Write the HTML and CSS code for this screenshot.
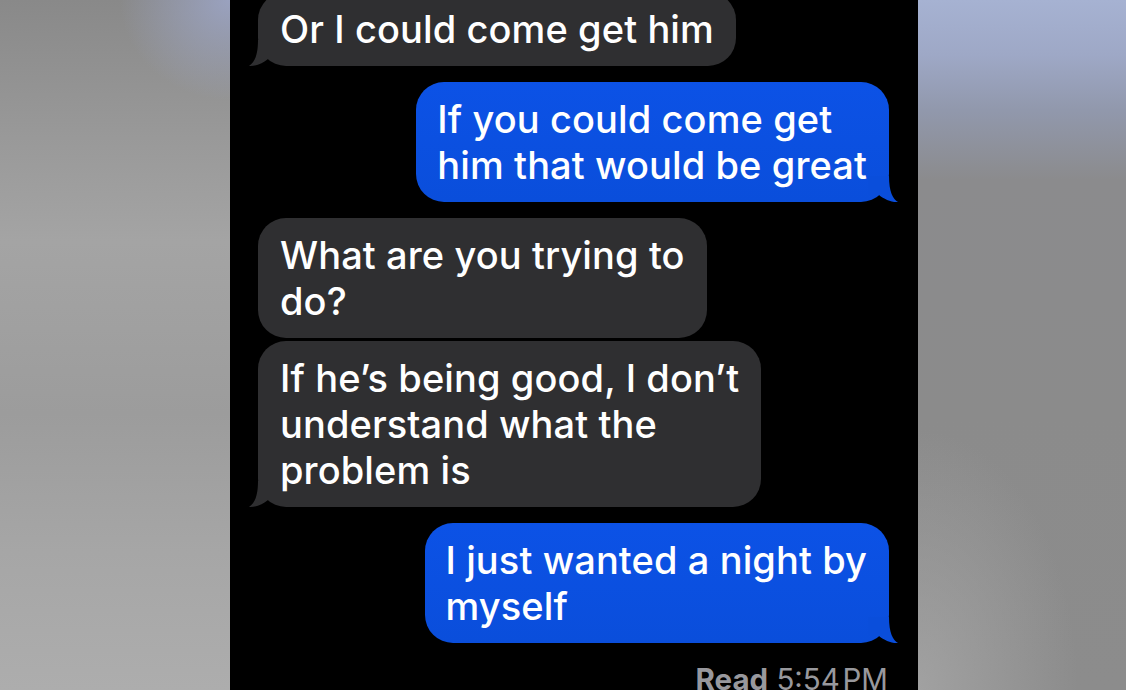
FILE: index.html
```html
<!DOCTYPE html>
<html lang="en">

<head>
    <meta charset="UTF-8">
    <meta name="viewport" content="width=device-width, initial-scale=1.0">
    <title>Messages</title>
    <link rel="stylesheet" href="styles.css">
</head>

<body>
    <div class="side side-left"></div>

    <div class="phone">
        <div class="thread">
            <div class="bubble them tail">Or I could come get him</div>
            <div class="bubble me tail">If you could come get<br>him that would be great</div>
            <div class="bubble them">What are you trying to<br>do?</div>
            <div class="bubble them tail joined">If he’s being good, I don’t<br>understand what the<br>problem is</div>
            <div class="bubble me tail">I just wanted a night by<br>myself</div>
            <div class="status"><b>Read</b> 5:54&#8202;PM</div>
        </div>
    </div>

    <div class="side side-right"></div>
</body>

</html>
```

FILE: styles.css
```css
body {
    font-family: Inter, "Noto Sans", sans-serif;
    display: flex;
    height: 100vh;
    margin: 0;
    overflow: hidden;
    background-color: #000;
}

.side {
    flex: 1;
}

.side-left {
    flex: 0 0 230px;
    background:
        radial-gradient(ellipse 110px 100px at 100% 0%, rgba(158, 168, 205, 0.8), rgba(158, 168, 205, 0)),
        linear-gradient(to bottom, #898989 0%, #999999 20%, #a4a4a4 35%, #9c9c9c 60%, #a6a6a6 80%, #adadad 100%);
}

.side-right {
    background:
        radial-gradient(ellipse 160px 260px at 0% 100%, rgba(170, 170, 170, 0.7), rgba(170, 170, 170, 0)),
        linear-gradient(to bottom, #a6b2d2 0%, #9ea8c6 8%, #9198ac 16%, #8b8b8d 26%, #8b8b8b 60%, #8c8c8c 100%);
}

.phone {
    flex: 0 0 688px;
    background-color: #000;
}

.thread {
    display: flex;
    flex-direction: column;
    margin-top: -8px;
    padding: 0 29px 0 28px;
}

.bubble {
    position: relative;
    font-size: 38px;
    font-weight: 500;
    line-height: 46px;
    color: #fff;
    padding: 14px 22px 14px 22px;
    border-radius: 28px;
    margin-top: 16px;
    letter-spacing: 0.1px;
}

.bubble:first-child {
    margin-top: 0;
}

.bubble.joined {
    margin-top: 3px;
}

.them {
    align-self: flex-start;
    background-color: #2f2f31;
}

.me {
    align-self: flex-end;
    padding-left: 21px;
    background: linear-gradient(to bottom, #0c52e6, #0a4edb);
}

/* message tails */
.tail::before {
    content: "";
    position: absolute;
    bottom: 0;
    width: 30px;
    height: 26px;
}

.them.tail::before {
    left: -9px;
    background-color: #2f2f31;
    clip-path: path("M 9 0 C 9 16, 5 23, 0 26 C 7 26.5, 14 23, 19 19 L 30 19 L 30 0 Z");
}

.me.tail::before {
    right: -9px;
    background-color: #0a4edb;
    clip-path: path("M 21 0 C 21 16, 25 23, 30 26 C 23 26.5, 16 23, 11 19 L 0 19 L 0 0 Z");
}

.status {
    align-self: flex-end;
    margin-top: 19px;
    margin-right: 1px;
    font-size: 29.5px;
    line-height: 34px;
    color: #98989d;
}

.status b {
    font-weight: 700;
}
```
